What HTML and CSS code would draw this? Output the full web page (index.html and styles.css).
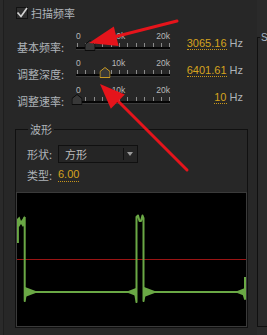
FILE: index.html
```html
<!DOCTYPE html>
<html lang="zh-CN">
<head>
    <meta charset="UTF-8">
    <meta name="viewport" content="width=device-width, initial-scale=1.0">
    <title>扫描频率</title>
    <link rel="stylesheet" href="styles.css">
</head>
<body>
    <div class="main">
        <div class="check-row">
            <span class="checkbox">
                <svg width="12" height="12" viewBox="0 0 12 12"><path d="M1.5 5.5 L5 9.5 L11 1" fill="none" stroke="#d2d2d2" stroke-width="1.7"/></svg>
            </span>
            <span class="cjk">扫描频率</span>
        </div>

        <div class="param">
            <div class="param-label">基本频率:</div>
            <div class="slider">
                <div class="scale"><span>0</span><span>10k</span><span>20k</span></div>
                <div class="rail">
                    <div class="ticks"></div>
                    <div class="track"></div>
                    <svg class="thumb" style="left: 15.33%" viewBox="0 0 11 11"><path d="M0.5 10.5 V4.5 L5.5 0.5 L10.5 4.5 V10.5 Z"/></svg>
                </div>
            </div>
            <div class="param-value"><span class="num">3065.16</span> Hz</div>
        </div>

        <div class="param">
            <div class="param-label">调整深度:</div>
            <div class="slider">
                <div class="scale"><span>0</span><span>10k</span><span>20k</span></div>
                <div class="rail">
                    <div class="ticks"></div>
                    <div class="track"></div>
                    <svg class="thumb active" style="left: 30.5%" viewBox="0 0 11 11"><path d="M0.5 10.5 V4.5 L5.5 0.5 L10.5 4.5 V10.5 Z"/></svg>
                </div>
            </div>
            <div class="param-value"><span class="num">6401.61</span> Hz</div>
        </div>

        <div class="param">
            <div class="param-label">调整速率:</div>
            <div class="slider">
                <div class="scale"><span>0</span><span>10k</span><span>20k</span></div>
                <div class="rail">
                    <div class="ticks"></div>
                    <div class="track"></div>
                    <svg class="thumb" style="left: 1%" viewBox="0 0 11 11"><path d="M0.5 10.5 V4.5 L5.5 0.5 L10.5 4.5 V10.5 Z"/></svg>
                </div>
            </div>
            <div class="param-value"><span class="num">10</span> Hz</div>
        </div>

        <div class="group">
            <div class="group-title">波形</div>
            <div class="field">
                <span class="field-label">形状:</span>
                <div class="select">
                    <span class="select-text">方形</span>
                    <span class="select-arrow"></span>
                </div>
            </div>
            <div class="field">
                <span class="field-label">类型:</span>
                <span class="num">6.00</span>
            </div>
            <div class="scope">
                <svg width="229" height="133" viewBox="0 0 229 133">
                    <line x1="0" y1="66.5" x2="229" y2="66.5" stroke="#9a1414" stroke-width="1"/>
                    <g fill="#6aa845">
                        <polygon points="0,26 2.5,23.5 4,28 5.5,26 7.5,22.5 8,31 6,34 4,31 2,34 0,33"/>
                        <polygon points="8,94 20,98.4 20,99.6 8,104"/>
                        <polygon points="110,98.4 119,95 119,103 110,99.6"/>
                        <polygon points="127,94 139,98.4 139,99.6 127,104"/>
                        <polygon points="219,98.4 228,95 228,103 219,99.6"/>
                    </g>
                    <path d="M0.9,50 V26 M7.7,24 V108 L9,99 H118 L119.5,109 V24 L121,22.5 L122.5,28 L124,28 L125.5,22.5 L126.5,25 V108 L128,99 H226 L228,106 V84"
                          fill="none" stroke="#6aa845" stroke-width="2" stroke-linejoin="round"/>
                </svg>
            </div>
        </div>
    </div>

    <div class="side">
        <div class="side-title">S</div>
    </div>

    <svg class="arrows" width="267" height="335" viewBox="0 0 267 335">
        <line x1="177" y1="21" x2="114" y2="37" stroke="#e5141b" stroke-width="3" stroke-linecap="round"/>
        <polygon points="89,43 118.6,45.9 113.8,26.5" fill="#e5141b"/>
        <line x1="187" y1="170" x2="118" y2="101" stroke="#e5141b" stroke-width="3" stroke-linecap="round"/>
        <polygon points="100,84 124.8,94.5 110.8,108.7" fill="#e5141b"/>
    </svg>
</body>
</html>
```

FILE: styles.css
```css
body {
    margin: 0;
    padding-left: 3px;
    height: 335px;
    overflow: hidden;
    position: relative;
    display: flex;
    background: #2a2a2a;
    color: #aeb3b8;
    font-family: "Liberation Sans", "Noto Sans CJK SC", sans-serif;
    font-size: 11px;
}

.main {
    width: 253px;
    border-left: 1px solid #1e1e1e;
    background: #272727;
}

.cjk {
    font-family: "Noto Sans CJK SC", sans-serif;
    line-height: 13px;
}

/* checkbox header */
.check-row {
    display: flex;
    align-items: center;
    gap: 3px;
    height: 12px;
    padding: 7px 0 0 12px;
}
.checkbox {
    width: 12px;
    height: 12px;
    box-sizing: border-box;
    border: 1px solid #121212;
    background: #2e2e2e;
}
.checkbox svg {
    display: block;
    margin: -1px;
    overflow: visible;
}

/* slider rows */
.param {
    display: flex;
    height: 27px;
    padding: 0 14px 0 13px;
}
.check-row + .param {
    margin-top: 13px;
}
.param-label {
    width: 56px;
    padding-top: 9px;
    line-height: 13px;
    font-family: "Noto Sans CJK SC", sans-serif;
}
.slider {
    width: 100px;
}
.scale {
    display: flex;
    justify-content: space-between;
    height: 9px;
    margin: 0 3px;
    font-size: 8.5px;
    line-height: 9px;
    color: #b8b8b8;
}
.rail {
    position: relative;
    margin: 2px 3px 0;
}
.ticks {
    height: 4px;
    margin-left: 1px;
    background: repeating-linear-gradient(to right, #8a8a8a 0 1px, transparent 1px 8.4px);
}
.track {
    height: 2px;
    background: #050505;
    border-bottom: 1px solid #3a3a3a;
}
.thumb {
    position: absolute;
    top: -3px;
    width: 11px;
    height: 11px;
    transform: translateX(-50%);
    fill: #383838;
    stroke: #0c0c0c;
    stroke-width: 1;
}
.thumb.active {
    stroke: #c99a22;
}
.param-value {
    flex: 1;
    padding-top: 5px;
    line-height: 13px;
    text-align: right;
    white-space: nowrap;
}
.num {
    color: #d6a31e;
    border-bottom: 1px dotted #c8961a;
}

/* waveform group */
.group {
    height: 197px;
    margin: 16px 9px 0 11px;
    border: 1px solid #101010;
}
.group-title {
    display: table;
    margin: -7px 0 0 12px;
    padding: 0 2px;
    background: #272727;
    line-height: 13px;
    font-family: "Noto Sans CJK SC", sans-serif;
}
.field {
    display: flex;
    align-items: center;
    margin: 9px 0 0 11px;
    line-height: 13px;
}
.field + .field {
    margin-top: 5px;
}
.field-label {
    width: 31px;
    font-family: "Noto Sans CJK SC", sans-serif;
}
.select {
    display: flex;
    align-items: center;
    width: 80px;
    height: 18px;
    box-sizing: border-box;
    border: 1px solid #101010;
    background: #252525;
}
.select-text {
    flex: 1;
    padding-left: 6px;
    color: #bcbcbc;
    font-family: "Noto Sans CJK SC", sans-serif;
}
.select-arrow {
    position: relative;
    width: 13px;
    height: 12px;
    border-left: 1px solid #101010;
}
.select-arrow::after {
    content: "";
    position: absolute;
    left: 3px;
    top: 4px;
    border-left: 3.5px solid transparent;
    border-right: 3.5px solid transparent;
    border-top: 4px solid #9a9a9a;
}
.scope {
    height: 133px;
    margin-top: 10px;
    border: 1px solid #3a3a3a;
    background: #000;
}
.scope svg {
    display: block;
}

/* cut-off panel on the right */
.side {
    flex: 1;
    height: 288px;
    margin-top: 37px;
    border: 1px solid #101010;
    border-right: 0;
    background: #2a2a2a;
}
.side-title {
    display: table;
    margin: -7px 0 0 2px;
    padding: 0 1px;
    background: #2a2a2a;
    font-size: 10px;
    line-height: 13px;
    color: #a9b6c6;
}

/* red annotation arrows */
.arrows {
    position: absolute;
    left: 0;
    top: 0;
    pointer-events: none;
}
```
